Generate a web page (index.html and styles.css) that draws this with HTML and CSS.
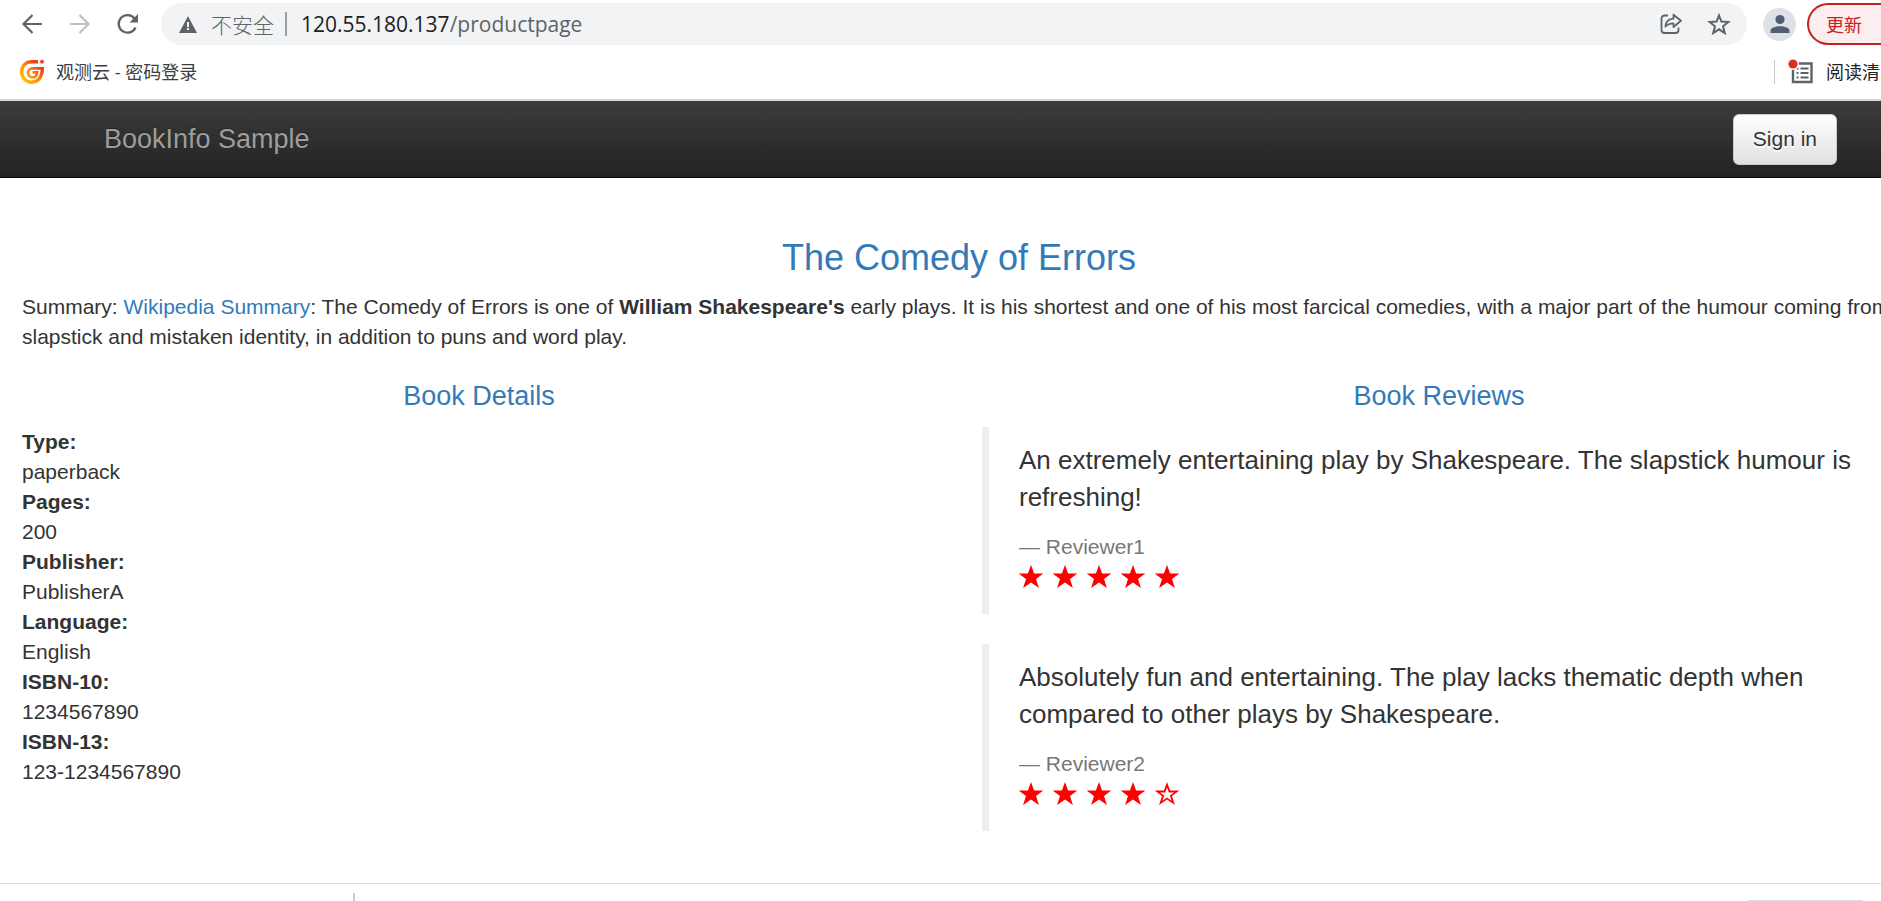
FILE: index.html
```html
<!DOCTYPE html>
<html lang="en">
<head>
<meta charset="utf-8">
<title>Simple Bookstore App</title>
<link rel="stylesheet" href="styles.css">
</head>
<body>
<svg class="defs" aria-hidden="true">
  <defs>
    <linearGradient id="logo-fill" gradientUnits="userSpaceOnUse" x1="2" y1="20" x2="20" y2="4">
      <stop offset="0" stop-color="#ffc400"/>
      <stop offset="0.5" stop-color="#ff8a10"/>
      <stop offset="0.9" stop-color="#fb3a10"/>
    </linearGradient>
    <symbol id="star" viewBox="0 0 24 24">
      <path fill="currentColor" d="M12 0l3.100 8.600H24.200L17 14 19.900 23 12 17.600 4.100 23 7 14-.2 8.600H8.900z"/>
    </symbol>
    <symbol id="star-empty" viewBox="0 0 24 24">
      <path fill="currentColor" fill-rule="evenodd" d="M12 0l3.100 8.600H24.200L17 14 19.900 23 12 17.600 4.100 23 7 14-.2 8.600H8.900zM12 5.500L10.200 10.400H5L9.100 13.500 7.500 18.700 12 15.600 16.500 18.700 14.900 13.500 19 10.400H13.800z"/>
    </symbol>
  </defs>
</svg>

<div class="window">
  <header class="browser">
    <div class="toolbar">
      <div class="nav-buttons">
        <button class="icon-button" type="button" aria-label="Back">
          <svg width="24" height="24" viewBox="0 0 24 24" fill="none" stroke="#5f6368" stroke-width="2.200"><path d="M22 12H4M12.500 3L3.500 12l9 9"/></svg>
        </button>
        <button class="icon-button" type="button" aria-label="Forward">
          <svg width="24" height="24" viewBox="0 0 24 24" fill="none" stroke="#bdc1c6" stroke-width="2.200"><path d="M2 12h18M11.500 3l9 9-9 9"/></svg>
        </button>
        <button class="icon-button" type="button" aria-label="Reload">
          <svg width="24" height="24" viewBox="0 0 24 24"><path d="M19.500 15.500A8.800 8.800 0 1 1 18.500 6.500" fill="none" stroke="#5f6368" stroke-width="2.300"/><path d="M22 2v8.500h-8.500z" fill="#5f6368"/></svg>
        </button>
      </div>
      <div class="address">
        <svg width="18" height="17" viewBox="0 0 18 17"><path d="M9 0l9 17H0z" fill="#5f6368"/><path d="M8 6h2v5H8zM8 12h2v2H8z" fill="#f1f3f4"/></svg>
        <span class="security">不安全</span>
        <span class="address-rule"></span>
        <span class="url"><span class="host">120.55.180.137</span>/productpage</span>
        <button class="icon-button address-action" type="button" aria-label="Share">
          <svg width="24" height="24" viewBox="0 0 24 24" fill="none" stroke="#5f6368" stroke-width="1.800"><path d="M9 3.500H5.500A3 3 0 0 0 2.500 6.500V18a3 3 0 0 0 3 3h11a3 3 0 0 0 3-3v-2.500"/><path d="M6.500 14.500c.3-5 3-7.500 8-7.800V2.700l7.500 6-7.500 6.300v-3.700c-3.500 0-6 .8-8 3.200z" stroke-linejoin="round"/></svg>
        </button>
        <button class="icon-button" type="button" aria-label="Bookmark this page">
          <svg width="24" height="24" viewBox="0 0 24 24" fill="none" stroke="#5f6368" stroke-width="2"><path d="M12 3.500l2.400 6 6.900.5-5.300 4.300 1.800 6.700-5.800-3.700L6.200 21 8 14.300 2.700 10l6.900-.5z"/></svg>
        </button>
      </div>
      <button class="avatar" type="button" aria-label="Profile">
        <svg width="20" height="20" viewBox="0 0 20 20" fill="#525e75"><circle cx="10" cy="5.500" r="4.600"/><path d="M.5 19v-2.200c0-3 5-4.600 9.500-4.600s9.500 1.600 9.500 4.600V19z"/></svg>
      </button>
      <button class="update" type="button">更新</button>
    </div>
    <div class="bookmarks">
      <a class="bookmark" href="#">
        <svg width="24" height="24" viewBox="0 0 24 24" fill="none" stroke="url(#logo-fill)"><path d="M18 1.700h-6C5.500 1.700 1.700 6 1.700 12S6 22.300 11.500 22.300 22 18 22.300 9.300" stroke-width="3.400"/><path d="M24 8.300H12.500a4.500 4.500 0 1 0 0 9c3 0 4.500-2 4.500-5h-4.500" stroke-width="2.800"/><circle cx="22" cy="1.800" r="2" fill="#f8401c" stroke="none"/></svg>
        观测云 - 密码登录
      </a>
      <a class="reading-list" href="#">
        <svg width="26" height="26" viewBox="0 0 26 26"><path d="M5 4.500h18.500v18.500H5z" fill="none" stroke="#5f6368" stroke-width="2.400"/><path d="M8.500 8.500h2v2h-2zM12.500 8.500h8v2h-8zM8.500 13h2v2h-2zM12.500 13h8v2h-8zM8.500 17.500h2v2h-2zM12.500 17.500h8v2h-8z" fill="#5f6368"/><circle cx="5" cy="5" r="6" fill="#fff"/><circle cx="5" cy="5" r="4.600" fill="#d93025"/></svg>
        阅读清单
      </a>
    </div>
  </header>

  <div class="page">
    <nav class="navbar">
      <a class="brand" href="#">BookInfo Sample</a>
      <button class="sign-in" type="button">Sign in</button>
    </nav>
    <main class="content">
      <h3 class="title">The Comedy of Errors</h3>
      <p class="summary">Summary: <a href="#">Wikipedia Summary</a>: The Comedy of Errors is one of <b>William Shakespeare's</b> early plays. It is his shortest and one of his most farcical comedies, with a major part of the humour coming from slapstick and mistaken identity, in addition to puns and word play.</p>
      <div class="columns">
        <section class="column">
          <h4 class="heading">Book Details</h4>
          <dl class="details">
            <dt>Type:</dt><dd>paperback</dd>
            <dt>Pages:</dt><dd>200</dd>
            <dt>Publisher:</dt><dd>PublisherA</dd>
            <dt>Language:</dt><dd>English</dd>
            <dt>ISBN-10:</dt><dd>1234567890</dd>
            <dt>ISBN-13:</dt><dd>123-1234567890</dd>
          </dl>
        </section>
        <section class="column">
          <h4 class="heading">Book Reviews</h4>
          <blockquote class="review">
            <p>An extremely entertaining play by Shakespeare. The slapstick humour is refreshing!</p>
            <small>— Reviewer1</small>
            <div class="stars" role="img" aria-label="5 of 5 stars">
              <svg><use href="#star"/></svg>
              <svg><use href="#star"/></svg>
              <svg><use href="#star"/></svg>
              <svg><use href="#star"/></svg>
              <svg><use href="#star"/></svg>
            </div>
          </blockquote>
          <blockquote class="review">
            <p>Absolutely fun and entertaining. The play lacks thematic depth when compared to other plays by Shakespeare.</p>
            <small>— Reviewer2</small>
            <div class="stars" role="img" aria-label="4 of 5 stars">
              <svg><use href="#star"/></svg>
              <svg><use href="#star"/></svg>
              <svg><use href="#star"/></svg>
              <svg><use href="#star"/></svg>
              <svg><use href="#star-empty"/></svg>
            </div>
          </blockquote>
        </section>
      </div>
    </main>
  </div>

  <footer class="shelf">
    <span class="shelf-divider"></span>
    <span class="shelf-button"></span>
  </footer>
</div>
</body>
</html>
```
FILE: styles.css
```css
* {
  box-sizing: border-box;
}

body {
  margin: 0;
  background: #fff;
  color: #333;
  font: 21px/30px "Liberation Sans", Arial, "Noto Sans CJK SC", sans-serif;
}

a {
  color: #337ab7;
  text-decoration: none;
}

button {
  font: inherit;
  cursor: pointer;
}

.defs {
  position: absolute;
  width: 0;
  height: 0;
}

.window {
  display: flex;
  flex-direction: column;
  height: 100vh;
  overflow: hidden;
}

/* Browser frame */

.browser {
  flex: none;
  border-bottom: 2px solid #d8d8d8;
  font-family: "Open Sans", "Noto Sans CJK SC", sans-serif;
}

.toolbar {
  display: flex;
  align-items: center;
  height: 48px;
  padding-left: 20px;
}

.nav-buttons {
  display: flex;
  gap: 24px;
  margin-right: 21px;
}

.icon-button {
  display: flex;
  padding: 0;
  border: 0;
  background: none;
}

.address {
  display: flex;
  flex: 1;
  align-items: center;
  height: 42px;
  padding: 0 16px 0 18px;
  border-radius: 21px;
  background: #f1f3f4;
  color: #5f6368;
}

.security {
  margin-left: 14px;
  font-family: "Noto Sans CJK SC", sans-serif;
  font-weight: 300;
}

.address-rule {
  width: 2px;
  height: 24px;
  margin: 0 14px 0 11px;
  background: #9aa0a6;
}

.host {
  color: #202124;
}

.address-action {
  margin: 0 24px 0 auto;
}

.avatar {
  display: flex;
  align-items: center;
  justify-content: center;
  width: 33px;
  height: 33px;
  margin: 0 11px 0 16px;
  padding: 0;
  border: 0;
  border-radius: 50%;
  background: #dee1e6;
}

.update {
  flex: none;
  width: 74px;
  height: 42px;
  padding: 0 0 0 17px;
  border: 2px solid #c5221f;
  border-right: 0;
  border-radius: 21px 0 0 21px;
  background: #fceeee;
  color: #c5221f;
  font-family: "Noto Sans CJK SC", sans-serif;
  font-size: 18px;
  text-align: left;
}

.bookmarks {
  display: flex;
  align-items: center;
  justify-content: space-between;
  height: 51px;
  padding: 0 0 3px 20px;
  font-family: "Open Sans", "Noto Sans CJK SC", sans-serif;
  font-size: 18px;
}

.bookmark {
  display: flex;
  align-items: center;
  gap: 12px;
  color: #3c4043;
}

.bookmark svg {
  overflow: visible;
}

.reading-list {
  display: flex;
  align-items: center;
  gap: 12px;
  width: 107px;
  height: 24px;
  padding-left: 13px;
  border-left: 1px solid #c8cacd;
  color: #202124;
  white-space: nowrap;
}

.reading-list svg {
  flex: none;
}

/* Web page, a little wider than the visible window */

.page {
  flex: 1;
  width: calc(100% + 37px);
}

.navbar {
  display: flex;
  align-items: center;
  justify-content: space-between;
  height: 77px;
  padding: 0 81px 0 104px;
  border-bottom: 1px solid #090909;
  background: linear-gradient(#3c3c3c, #222);
}

.brand {
  color: #9d9d9d;
  font-size: 27px;
  text-shadow: 0 -1px 0 rgba(0, 0, 0, 0.25);
}

.sign-in {
  height: 51px;
  padding: 0 19px;
  border: 1px solid #ccc;
  border-radius: 6px;
  background: linear-gradient(#fff, #e0e0e0);
  color: #333;
  text-shadow: 0 2px 0 #fff;
}

.content {
  padding: 60px 22px 0;
}

.title {
  margin: 0 0 14px;
  color: #337ab7;
  font-size: 36px;
  font-weight: 400;
  line-height: 40px;
  text-align: center;
}

.summary {
  margin: 0 0 29px;
}

.columns {
  display: grid;
  grid-template-columns: 1fr 1fr;
  gap: 46px;
}

.heading {
  margin: 0 0 16px;
  color: #337ab7;
  font-size: 27px;
  font-weight: 400;
  text-align: center;
}

.details {
  margin: 0;
}

.details dt {
  font-weight: 700;
}

.details dd {
  margin: 0;
}

.review {
  margin: 0 0 30px;
  padding: 15px 30px;
  border-left: 7px solid #eee;
  font-size: 26px;
}

.review p {
  margin: 0 0 16px;
  line-height: 37px;
}

.review small {
  display: block;
  color: #777;
  font-size: 21px;
}

.stars {
  display: flex;
  gap: 10px;
  padding: 3px 0 10px;
  color: #f00;
}

.stars svg {
  width: 24px;
  height: 24px;
  overflow: visible;
}

/* Download shelf */

.shelf {
  display: flex;
  flex: none;
  justify-content: space-between;
  height: 18px;
  padding: 9px 19px 0 353px;
  border-top: 1px solid #dadada;
  background: #fff;
}

.shelf-divider {
  width: 2px;
  background: #ccc;
}

.shelf-button {
  align-self: flex-end;
  width: 114px;
  height: 1px;
  background: #dadce0;
}
```
